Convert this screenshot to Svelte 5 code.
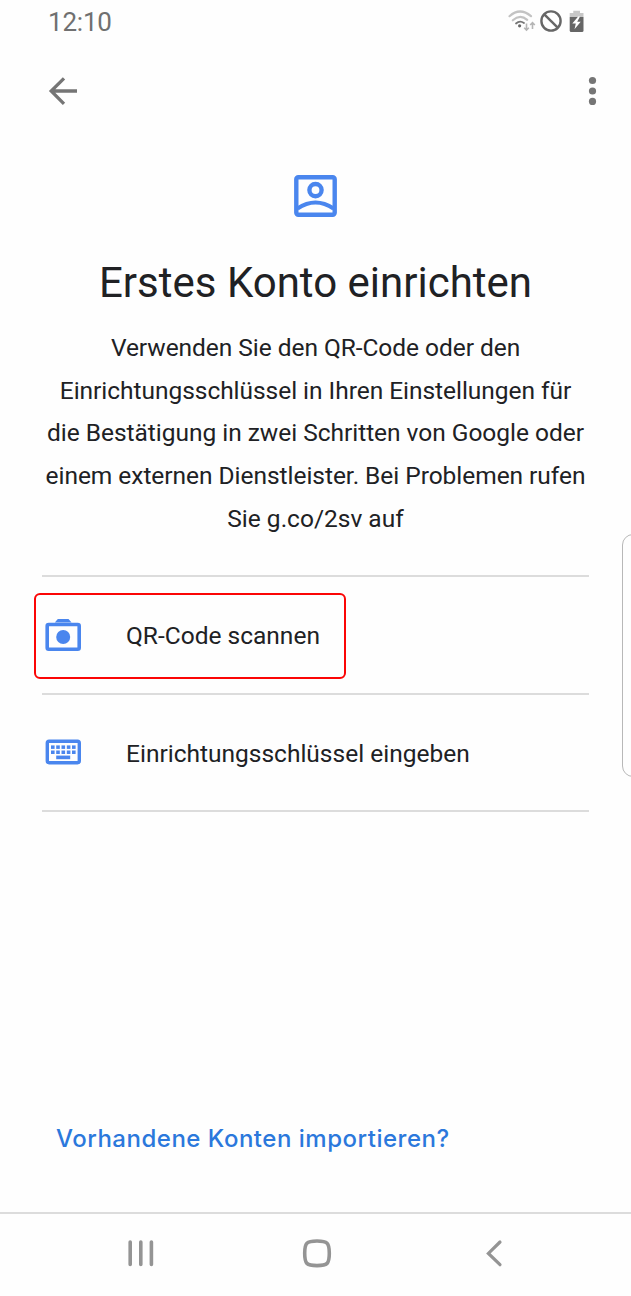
<script>
  const lines = [
    { text: 'Verwenden Sie den QR-Code oder den', spacing: -0.05 },
    { text: 'Einrichtungsschlüssel in Ihren Einstellungen für', spacing: -0.04 },
    { text: 'die Bestätigung in zwei Schritten von Google oder', spacing: -0.03 },
    { text: 'einem externen Dienstleister. Bei Problemen rufen', spacing: -0.04 },
    { text: 'Sie g.co/2sv auf', spacing: 0 }
  ];
</script>

<div class="screen">
  <header class="status">
    <span class="time">12:10</span>
    <svg class="indicators" width="80" height="26" viewBox="508 9 80 26" fill="none">
      <g stroke-width="2.2" stroke-linecap="round">
        <path d="M509.5 16.2Q520 6.8 531 16.2" stroke="#c3c3c3" />
        <path d="M512.8 20.3Q520 13.8 527.2 19.8" stroke="#c3c3c3" />
        <path d="M516 23.5Q519.8 20 524 23" stroke="#757575" stroke-width="1.8" />
      </g>
      <circle cx="519.6" cy="25.8" r="1.6" fill="#666" />
      <path d="M526.5 23.5V30M524.2 27.8L526.5 30.2L528.8 27.8M532.5 29V22.8M530.2 25L532.5 22.6L534.8 25" stroke="#b5b5b5" stroke-width="1.6" />
      <circle cx="551" cy="21" r="9.6" stroke="#666" stroke-width="2.4" />
      <path d="M544.3 14.3L557.7 27.7" stroke="#666" stroke-width="2.4" />
      <path d="M573.3 10.8H580V13H583.5V17H569.7V13H573.3Z" fill="#c7c7c7" />
      <path d="M569.7 17H583.5V30.5Q583.5 32 582 32H571.2Q569.7 32 569.7 30.5Z" fill="#666" />
      <path d="M578.2 16.5L572.3 23.6H575.8L574.5 29.2L580.7 21.8H577.2L580 16.5Z" fill="#fff" />
    </svg>
  </header>

  <div class="appbar">
    <svg width="30" height="30" viewBox="48 76 30 30" fill="none" stroke="#757575" stroke-width="3.3">
      <path d="M77 91H52M64 78.4L51.2 91L64 103.8" />
    </svg>
    <svg width="10" height="30" viewBox="0 0 10 30" fill="#757575">
      <circle cx="5.5" cy="4.5" r="3.6" /><circle cx="5.5" cy="15" r="3.6" /><circle cx="5.5" cy="25.4" r="3.6" />
    </svg>
  </div>

  <main>
    <svg class="account" width="44" height="44" viewBox="0.5 0 44 44" fill="none" stroke="#4a86ee" stroke-width="4.4">
      <rect x="2.8" y="3.3" width="38.4" height="37.4" rx="2" />
      <circle cx="22" cy="16.1" r="6.1" />
      <path d="M4 34.5Q22 22.5 40 34.5" stroke-width="4" />
    </svg>
    <h1>Erstes Konto einrichten</h1>
    <p class="intro">
      {#each lines as line}
        <span style="letter-spacing: {line.spacing}px">{line.text}</span>
      {/each}
    </p>

    <ul>
      <li class="selected">
        <svg width="36" height="36" viewBox="45 617 36 36" fill="none">
          <path d="M54.8 622.5L57.8 619H68.5L71.6 622.5Z" fill="#4a86ee" />
          <rect x="47.2" y="624.5" width="32" height="24.8" rx="1.5" stroke="#4a86ee" stroke-width="3.6" />
          <circle cx="63.2" cy="637" r="7" fill="#4a86ee" />
        </svg>
        <span>QR-Code scannen</span>
      </li>
      <li>
        <svg width="36" height="36" viewBox="45 734.4 36 36" fill="none">
          <rect x="47.3" y="741.6" width="32" height="21.6" rx="1.8" stroke="#4a86ee" stroke-width="3.4" />
          {#each [51, 56.2, 61.5, 66.8, 72] as x}
            <rect {x} y="745.8" width="3.6" height="3.5" fill="#4a86ee" />
            <rect {x} y="750.9" width="3.6" height="3.5" fill="#4a86ee" />
          {/each}
          <rect x="56.2" y="756" width="14" height="3.6" fill="#4a86ee" />
        </svg>
        <span>Einrichtungsschlüssel eingeben</span>
      </li>
    </ul>
    <div class="import">Vorhandene Konten importieren?</div>
  </main>

  <nav>
    <svg width="631" height="82" viewBox="0 1214 631 82" fill="none" stroke="#949494" stroke-width="3.6" stroke-linecap="round">
      <path d="M130.2 1242V1264.5M140.8 1242V1264.5M151.4 1242V1264.5" />
      <path d="M317 1241C327.5 1241 329.3 1242.8 329.3 1253.3S327.5 1265.6 317 1265.6S304.7 1263.8 304.7 1253.3S306.5 1241 317 1241Z" />
      <path d="M500 1242L488.4 1253.4L500 1264.7" stroke-width="3.2" />
    </svg>
  </nav>
  <div class="edge"></div>
</div>

<style>
  :global(body) { margin: 0; background: #fefefe; }
  .screen {
    position: relative;
    display: flex;
    flex-direction: column;
    width: 631px;
    height: 1296px;
    overflow: hidden;
    background: #fefefe;
    color: #202124;
    font-family: Roboto, sans-serif;
  }
  .status {
    display: flex;
    justify-content: space-between;
    align-items: center;
    height: 44px;
    padding: 0 43px 0 48px;
    box-sizing: border-box;
  }
  .time { font-size: 26px; line-height: 44px; letter-spacing: -0.2px; color: #707070; }
  .appbar {
    display: flex;
    justify-content: space-between;
    align-items: center;
    height: 94px;
    padding: 0 34px 0 48px;
    box-sizing: border-box;
  }
  main { flex: 1; display: flex; flex-direction: column; padding: 36px 42px 0; }
  .account { align-self: center; display: block; }
  h1 {
    margin: 38px -20px 0;
    font-size: 42px;
    line-height: 54px;
    font-weight: 400;
    text-align: center;
    white-space: nowrap;
  }
  .intro { margin: 17px -20px 0; font-size: 24.5px; line-height: 42.67px; text-align: center; }
  .intro span { display: block; white-space: nowrap; }
  ul { list-style: none; margin: 34.7px 0 0; padding: 0; border-top: 2px solid #dcdcdc; }
  li {
    position: relative;
    display: flex;
    align-items: center;
    gap: 45px;
    height: 117.5px;
    box-sizing: border-box;
    padding-left: 3px;
    border-bottom: 2px solid #dcdcdc;
    font-size: 24.5px;
    white-space: nowrap;
  }
  li span { padding-top: 2px; }
  .selected::before {
    content: '';
    position: absolute;
    left: -8px;
    top: 16px;
    width: 312px;
    height: 86px;
    box-sizing: border-box;
    border: 2px solid #fb0505;
    border-radius: 6px;
  }
  .import {
    margin: auto 0 57px 14px;
    font-family: Inter, sans-serif;
    font-size: 24px;
    line-height: 32px;
    font-weight: 500;
    letter-spacing: 0.51px;
    color: #2b78dc;
    white-space: nowrap;
  }
  nav { height: 82px; border-top: 2px solid #dcdcdc; }
  nav svg { display: block; }
  .edge {
    position: absolute;
    left: 622px;
    top: 534px;
    width: 30px;
    height: 243px;
    box-sizing: border-box;
    border: 1.5px solid #b8b8b8;
    border-radius: 11px;
  }
</style>
